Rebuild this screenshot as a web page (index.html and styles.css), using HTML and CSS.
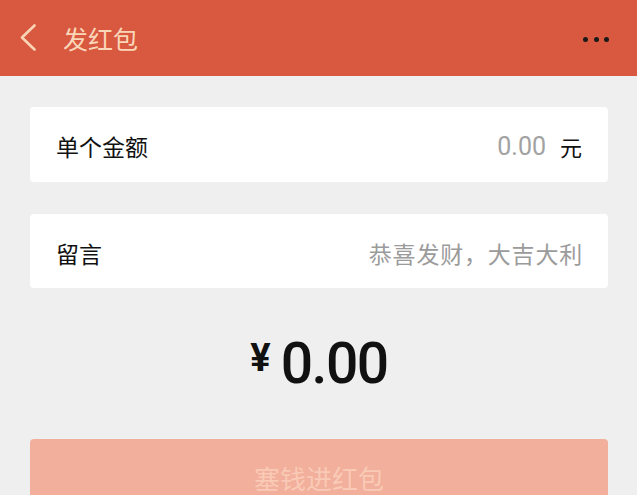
FILE: index.html
```html
<!DOCTYPE html>
<html lang="zh-CN">
<head>
<meta charset="utf-8">
<title>发红包</title>
<link rel="stylesheet" href="styles.css">
</head>
<body>
<header class="topbar">
  <div class="topbar-left">
    <svg class="back" width="16" height="27" viewBox="0 0 16 27" aria-hidden="true">
      <polyline points="14.5,1.5 2,13.5 14.5,25.5" fill="none" stroke="#f9d4b6" stroke-width="2.6" stroke-linecap="round" stroke-linejoin="round"/>
    </svg>
    <span class="title">发红包</span>
  </div>
  <div class="more"><i></i><i></i><i></i></div>
</header>
<main class="content">
  <section class="card">
    <span class="label">单个金额</span>
    <span class="value"><span class="num">0.00</span><span class="unit">元</span></span>
  </section>
  <section class="card card-msg">
    <span class="label">留言</span>
    <span class="placeholder">恭喜发财，大吉大利</span>
  </section>
  <div class="amount">
    <span class="yen">¥</span><span class="total">0.00</span>
  </div>
  <button class="submit" type="button">塞钱进红包</button>
</main>
</body>
</html>
```
FILE: styles.css
```css
html, body {
  margin: 0;
  padding: 0;
  background: #efefef;
  overflow: hidden;
  font-family: "Noto Sans CJK SC", "Noto Sans", sans-serif;
}
.topbar {
  height: 76px;
  background: #d95940;
  display: flex;
  align-items: center;
  justify-content: space-between;
  padding: 0 28px 0 20px;
  box-sizing: border-box;
}
.topbar-left {
  display: flex;
  align-items: center;
}
.back {
  display: block;
  margin-top: -1px;
}
.title {
  margin-left: 27px;
  font-size: 25px;
  line-height: 1;
  color: #fad6b8;
}
.more {
  display: flex;
  gap: 5.5px;
  align-items: center;
  margin-top: 3px;
}
.more i {
  display: block;
  width: 5px;
  height: 5px;
  border-radius: 50%;
  background: #1a1a1a;
}
.content {
  padding: 31px 29px 0 30px;
}
.card {
  height: 75px;
  background: #fff;
  border-radius: 4px;
  display: flex;
  align-items: center;
  justify-content: space-between;
  padding: 0 26px;
  box-sizing: border-box;
}
.card-msg {
  margin-top: 32px;
  height: 74px;
}
.label {
  font-size: 23px;
  color: #111;
  line-height: 1;
  margin-top: 4px;
}
.value {
  display: flex;
  align-items: center;
  margin-top: 3px;
}
.num {
  font-family: Roboto, "Noto Sans", sans-serif;
  font-weight: 400;
  font-size: 25px;
  color: #a2a2a2;
  line-height: 1;
}
.unit {
  margin-left: 14px;
  font-size: 22px;
  color: #111;
  line-height: 1;
}
.placeholder {
  font-size: 23px;
  letter-spacing: 0.8px;
  margin-right: -1px;
  color: #9b9b9b;
  line-height: 1;
  margin-top: 4px;
}
.amount {
  height: 151px;
  display: flex;
  align-items: center;
  justify-content: center;
}
.yen {
  align-self: center;
  font-family: Roboto, sans-serif;
  font-weight: 700;
  font-size: 38px;
  line-height: 1;
  color: #111;
  margin-top: -12px;
  margin-right: 10px;
}
.total {
  font-family: Roboto, sans-serif;
  font-weight: 500;
  font-size: 57px;
  letter-spacing: -1.5px;
  line-height: 1;
  color: #111;
}
.submit {
  display: flex;
  align-items: center;
  justify-content: center;
  width: 100%;
  height: 76px;
  border: 0;
  border-radius: 4px;
  background: #f2af9b;
  color: #f9cab6;
  font-family: "Noto Sans CJK SC", sans-serif;
  font-size: 26px;
  padding: 0;
}
```
